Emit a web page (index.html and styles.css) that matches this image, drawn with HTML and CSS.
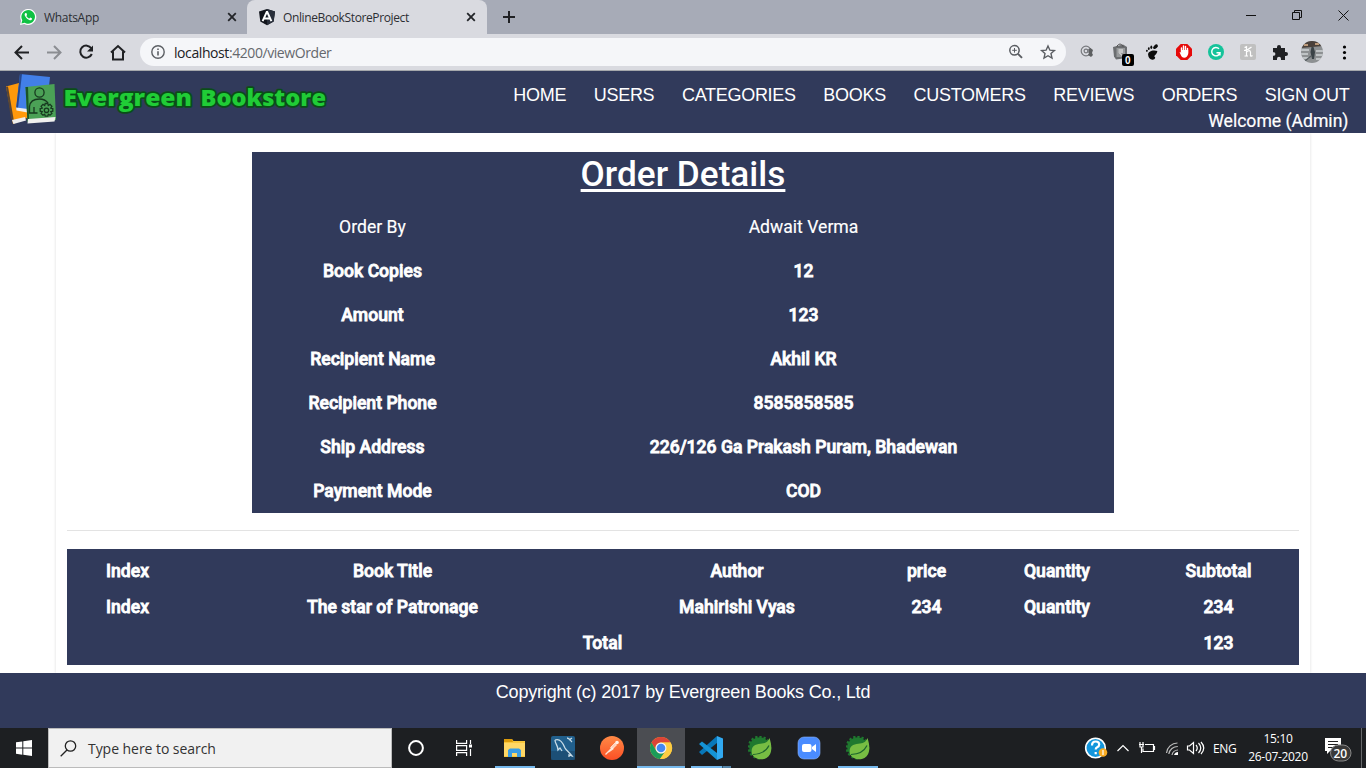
FILE: index.html
```html
<!DOCTYPE html>
<html lang="en">
<head>
<meta charset="utf-8">
<title>OnlineBookStoreProject</title>
<link rel="stylesheet" href="styles.css">
</head>
<body>
<div class="tabs">
  <div class="tab">
    <svg class="fav" width="18" height="18" viewBox="0 0 18 18"><path d="M1 17l1.2-4.3A8 8 0 1 1 5.300 15.900Z" fill="#fff"/><path d="M2.400 15.600l.9-3.300A6.800 6.800 0 1 1 5.700 14.700Z" fill="#0fc143"/><path d="M6.600 5c-1.200.6-1.200 2-.4 3.300 1 1.900 2.600 3.300 4.600 3.900 1.300.3 2.300-.5 2.300-1.700L11.300 9.600l-.9 1C9 10.200 7.900 9 7.300 7.900L8.100 7 7.400 5.100Z" fill="#fff"/></svg>
    <span class="tab-title t-wa">WhatsApp</span>
    <svg class="x" width="10" height="10" viewBox="0 0 10 10"><path d="M1.200 1.200l7.600 7.600M8.800 1.200L1.200 8.800" stroke="#222428" stroke-width="1.800"/></svg>
  </div>
  <div class="tab active">
    <svg class="fav" width="18" height="18" viewBox="0 0 18 18"><path d="M9 1l8 2.600-1.300 10L9 17.300l-6.700-3.700L1 3.600Z" fill="#12151c"/><path d="M9 1l8 2.600-1.300 10L9 17.300Z" fill="#292f3b"/><path d="M9 3.500L4.600 13.200M9 3.500l4.400 9.700M6.300 10.500h5.400" stroke="#fff" stroke-width="1.900" fill="none"/></svg>
    <span class="tab-title t-ob">OnlineBookStoreProject</span>
    <svg class="x" width="10" height="10" viewBox="0 0 10 10"><path d="M1.200 1.200l7.600 7.600M8.800 1.200L1.200 8.800" stroke="#222428" stroke-width="1.800"/></svg>
  </div>
  <svg class="plus" width="12" height="12" viewBox="0 0 12 12"><path d="M6 0v12M0 6h12" stroke="#202124" stroke-width="2"/></svg>
  <svg class="winbtns" width="106" height="14" viewBox="0 0 106 14"><path d="M0 7.500h10M46.500 4.500h7v7h-7zM48.500 4.500v-2h7v7h-2M92.500 2.500l10 10M102.500 2.500l-10 10" stroke="#111" fill="none"/></svg>
</div>
<div class="toolbar">
  <svg class="navbtns" width="116" height="20" viewBox="0 0 116 20" fill="none" stroke-width="2"><path d="M29 10.500H16M22 4l-6.500 6.500L22 17" stroke="#202124"/><path d="M47 10.500h13M54 4l6.500 6.500L54 17" stroke="#8b8d92"/><path d="M91.300 6.300A6 6 0 1 0 91.800 12" stroke="#202124"/><path d="M93 3.500v6h-6z" fill="#202124"/><path d="M111 10.500l7-6.500 7 6.500M113 9.500v8h10v-8" stroke="#202124"/></svg>
  <div class="omni">
    <svg width="14" height="14" viewBox="0 0 14 14"><circle cx="7" cy="7" r="6.200" fill="none" stroke="#5c5f64" stroke-width="1.400"/><path d="M7 6.200v4.300M7 3.500v1.600" stroke="#5c5f64" stroke-width="1.600"/></svg>
    <span class="url"><b>localhost</b>:4200/viewOrder</span>
    <svg class="omni-r" width="48" height="16" viewBox="0 0 48 16" fill="none" stroke="#5a5d62"><circle cx="5.500" cy="6.300" r="4.700" stroke-width="1.500"/><path d="M9 9.800l4 4" stroke-width="1.900"/><path d="M3.200 6.300h4.600M5.500 4v4.600"/><path d="M39 2l1.900 4.200 4.500.4-3.400 3 1 4.400-4-2.300-4 2.300 1-4.400-3.400-3 4.500-.4Z" stroke-width="1.400"/></svg>
  </div>
  <svg class="ext" width="286" height="32" viewBox="1080 36 286 32">
    <circle cx="1086" cy="51" r="4.800" fill="none" stroke="#77797d" stroke-width="1.200"/><circle cx="1086" cy="51" r="1.900" fill="none" stroke="#77797d" stroke-width="1.200"/><path d="M1088 49v3q1.500 1.200 2.500-.7" fill="none" stroke="#77797d"/><path d="M1088.500 49l2-1 2.500 2-1 3 1 2-2 2-3-2 1-2Z" fill="#5d5f61"/>
    <path d="M1113 47l10-2.500 4 2.500v11l-11 1.500-2-3Z" fill="#6b6d70"/><path d="M1117 47v-1q3-4 6 0v1" stroke="#555" fill="none"/><path d="M1116.500 48h8.500v9h-8.500z" fill="#97999b"/><path d="M1118.500 50h4.500M1118.500 52h4.500M1119.500 53l3 3" stroke="#eee"/>
    <rect x="1122" y="54" width="12" height="12" rx="2" fill="#000"/><text x="1125" y="64" class="badge">0</text>
    <g fill="#0c0c0c"><ellipse cx="1155.500" cy="46.700" rx="2.800" ry="1.700" transform="rotate(-40 1155.500 46.700)"/><ellipse cx="1151.300" cy="47.200" rx="1" ry="1.700"/><ellipse cx="1148.800" cy="48.700" rx=".9" ry="1.400"/><ellipse cx="1146.900" cy="50.800" rx=".9" ry="1.100"/><path d="M1157.300 51c-4-1.700-9.600.3-9.200 3.800.3 2.700 2 5.200 4.600 5 2.600-.3 3.200-2.300 1.700-3.200-1-.6 3-2.700 2.900-5.600Z"/></g>
    <path d="M1180.700 44h6.600l4.700 4.700v6.600l-4.700 4.700h-6.600l-4.700-4.700v-6.600Z" fill="#e60a0a"/><path d="M1181.500 52v-4M1183.500 51v-5M1185.500 51v-4.500M1187.500 53v-4.500" stroke="#fff" stroke-width="1.400" stroke-linecap="round"/><path d="M1179.500 52l2 .5V50h6.700v4q-1 3.700-4 3.700-2.500 0-3.500-3Z" fill="#fff"/>
    <circle cx="1216" cy="52" r="8" fill="#15c39a"/><path d="M1219 48.800a4.200 4.200 0 1 0 1 4h-3.500M1220 52.500v3" stroke="#fff" stroke-width="1.400" fill="none"/>
    <rect x="1240" y="44" width="16" height="16" rx="2" fill="#c0c0c0"/><path d="M1244.500 47.500l2-.8v9M1244.500 56h3.500M1246.500 52q3.500-3 4 .3v3.500q.8.800 2-.3M1244 50.500q4-.3 7.500-3.500" stroke="#fff" stroke-width="1.200" fill="none"/>
    <path d="M1273 48h4v-1a2 2 0 0 1 4 0v1h4v4h1a2 2 0 0 1 0 4h-1v4h-4v-1.300a2 2 0 0 0-4 0v1.300h-4v-4.300h1a1.800 1.800 0 0 0 0-3.500h-1Z" fill="#202124"/>
    <clipPath id="av"><circle cx="1312" cy="52" r="11"/></clipPath><g clip-path="url(#av)"><path d="M1300 40h24v24h-24Z" fill="#8d9092"/><path d="M1300 40h24v6l-24 2Z" fill="#4a403a"/><path d="M1304 44h4v2h-4M1315 43h4v2h-4" fill="#bd9a7a"/><path d="M1300 50h9M1300 54h8M1316 51h8M1316 55h8M1301 58h8M1316 59h5" stroke="#d0d4d6" stroke-width="1.400"/><path d="M1311.500 47h2l1.500 5-1 7h-2l-1.500-7Z" fill="#3b4347"/><path d="M1305 61l6-5" stroke="#555c60" stroke-width="1.400"/></g>
    <circle cx="1344.500" cy="47" r="1.600"/><circle cx="1344.500" cy="52.500" r="1.600"/><circle cx="1344.500" cy="58" r="1.600"/>
  </svg>
</div>
<header class="site-head">
  <svg class="logo" width="335" height="60" viewBox="0 71 335 60">
    <path d="M6 86.500l13-3.500 10 34-16 7Z" fill="#ff990b"/><path d="M6 87l2-.5 6 35-3-3Z" fill="#5b4632"/><path d="M12 120l13-3 1 3.500-12.500 3.500Z" fill="#eee"/>
    <path d="M20 74l30 3-4 36-30-4Z" fill="#427fe8"/><path d="M20 74l2 0-4 34-2 1Z" fill="#25478c"/><path d="M16 107.500l12 1.500-.5 3.500-11-2Z" fill="#eee"/>
    <path d="M25.500 87l29-3 1.500 36-28.500 2Z" fill="#4ba156"/><path d="M25.500 87l2.500 0 1 32-1.500 3.500Z" fill="#1b5427"/><path d="M28 119l27.500-2-1 4.500-27 2Z" fill="#f0f0ee"/>
    <g fill="none" stroke="#17391f" stroke-width="1.300"><circle cx="39.500" cy="92.500" r="4.600"/><path d="M37.500 113h-8v-6.500q.8-7.500 10-7.500 5.500 0 8.500 4M34 107v6"/><circle cx="46.500" cy="110.300" r="2.200"/><path d="M45.200 103.500h2.600l.5 2 1.700-1.100 1.900 1.900-1.100 1.700 2 .5v2.700l-2 .5 1.100 1.800-1.900 1.800-1.700-1.100-.5 2h-2.600l-.5-2-1.700 1.100-1.900-1.800 1.100-1.800-2-.5v-2.700l2-.5-1.100-1.700 1.900-1.900 1.700 1.100Z"/></g>
    <text class="brand" x="63.500" y="105.500" textLength="128.500" lengthAdjust="spacingAndGlyphs">Evergreen</text>
    <text class="brand" x="200.500" y="105.500" textLength="125.500" lengthAdjust="spacingAndGlyphs">Bookstore</text>
  </svg>
  <div class="head-r">
    <nav><a>HOME</a><a>USERS</a><a>CATEGORIES</a><a>BOOKS</a><a>CUSTOMERS</a><a>REVIEWS</a><a>ORDERS</a><a>SIGN OUT</a></nav>
    <div class="welcome">Welcome (Admin)</div>
  </div>
</header>
<main>
  <section class="order">
    <h1>Order Details</h1>
    <div class="pair plain"><span>Order By</span><span>Adwait Verma</span></div>
    <div class="pair"><span>Book Copies</span><span>12</span></div>
    <div class="pair"><span>Amount</span><span>123</span></div>
    <div class="pair"><span>Recipient Name</span><span>Akhil KR</span></div>
    <div class="pair"><span>Recipient Phone</span><span>8585858585</span></div>
    <div class="pair"><span>Ship Address</span><span>226/126 Ga Prakash Puram, Bhadewan</span></div>
    <div class="pair"><span>Payment Mode</span><span>COD</span></div>
  </section>
  <hr>
  <section class="items">
    <div class="row"><span>Index</span><span>Book Title</span><span>Author</span><span>price</span><span>Quantity</span><span>Subtotal</span></div>
    <div class="row"><span>Index</span><span>The star of Patronage</span><span>Mahirishi Vyas</span><span>234</span><span>Quantity</span><span>234</span></div>
    <div class="row"><span class="total">Total</span><span>123</span></div>
  </section>
</main>
<footer>Copyright (c) 2017 by Evergreen Books Co., Ltd</footer>
<div class="taskbar">
  <div class="start"><svg width="16" height="16" viewBox="0 0 16 16"><path d="M0 2.300l6.300-.9v6.100H0ZM7.300 1.200L16 0v7.500H7.300ZM0 8.500h6.300v6.200L0 13.800ZM7.300 8.500H16V16l-8.700-1.200Z" fill="#fff"/></svg></div>
  <div class="search"><svg width="17" height="17" viewBox="0 0 17 17"><circle cx="10.500" cy="6" r="5.200" fill="none" stroke="#222" stroke-width="1.300"/><path d="M7 10L.7 16.300" stroke="#222" stroke-width="1.300"/></svg><span>Type here to search</span></div>
  <div class="apps">
    <div class="app"><svg width="24" height="24"><circle cx="12" cy="12" r="6.900" fill="none" stroke="#fff" stroke-width="2"/></svg></div>
    <div class="app"><svg width="24" height="24" fill="none" stroke="#fff" stroke-width="1.200"><path d="M3.600 4v3.400h10V4M3.600 20v-3.400h10V20M3.600 9.600h10v4.800h-10zM17.500 4v4M17.500 13v7"/><path d="M16 8.500h3v3h-3z" fill="#fff" stroke="none"/></svg></div>
    <div class="app open nudge"><svg width="24" height="24"><path d="M1 3h8l1.500 2H22v16H1Z" fill="#f9c73c"/><path d="M1 3h8l1 3H1Z" fill="#dc9b0b"/><path d="M1 7h21v13H1Z" fill="#ffd766"/><path d="M5 21v-7l2-1.500h9l2 1.500v7h-4v-4H9v4Z" fill="#3b9de4"/></svg></div>
    <div class="app"><svg width="24" height="24"><rect width="24" height="24" rx="2" fill="#215f8c"/><path d="M0 15h24v9H0Z" fill="#194567" opacity=".6"/><path d="M4 4c5-2 8 3 10 8 1 2 4 4 7 8l-3-1v2M4 4c0 4 3 5 3 10l2-2 2 3M16 2c2 0 3 2 5 4M18 4l3-2" fill="none" stroke="#c9dce7" stroke-width="1.300"/></svg></div>
    <div class="app"><svg width="24" height="24"><defs><linearGradient id="pm" x2="0" y2="1"><stop stop-color="#ff8a46"/><stop offset="1" stop-color="#fb4f25"/></linearGradient></defs><circle cx="12" cy="12" r="12" fill="url(#pm)"/><path d="M5.500 18.500l8-8M8.500 16l5-3.500" stroke="#ffe5d5" stroke-width="1.300"/><path d="M10.500 11.500l4.500-4.500 1.500 2-3.500 3.500Z" fill="#ffcfb5" stroke="#fff" stroke-width=".6"/><circle cx="17" cy="6.500" r="1.800" fill="#fff1e8"/></svg></div>
    <div class="app current"><svg width="24" height="24"><circle cx="12" cy="12" r="11" fill="#fbc12e"/><path d="M2.500 6.500A11 11 0 0 1 21.600 6.500H12A5.500 5.500 0 0 0 7.200 14.700Z" fill="#dc4437"/><path d="M2.500 6.500A11 11 0 0 0 11 23l5.800-8.300a5.500 5.500 0 0 1-9.600 0Z" fill="#1a9c59"/><path d="M12 6.500h9.600A11 11 0 0 1 11 23l5.800-8.300A5.500 5.500 0 0 0 12 6.500Z" fill="#fdcc42"/><circle cx="12" cy="12" r="5.500" fill="#f2f4f6"/><circle cx="12" cy="12" r="4.300" fill="#4487f2"/></svg></div>
    <div class="app open code"><svg width="24" height="24"><path d="M18 0v7L3 19l-3-3Z" fill="#0877b9"/><path d="M0 8l3-2.500L18 17v7L0 8Z" fill="#1593d5"/><path d="M18 0l6 2.500v19L18 24Z" fill="#31a9f1"/></svg></div>
    <div class="app"><svg width="24" height="24"><use href="#spring"/></svg></div>
    <div class="app"><svg width="24" height="24"><rect x="1" y="1" width="22" height="22" rx="6" fill="#4a8cff" stroke="#8bb4fa" stroke-width=".6"/><rect x="5" y="8" width="9.500" height="8" rx="2" fill="#fff"/><path d="M15 11l4-3v8l-4-3Z" fill="#fff"/></svg></div>
    <div class="app open"><svg width="24" height="24"><g id="spring"><circle cx="11.500" cy="11.500" r="10.300" fill="#1f792f"/><circle cx="11.500" cy="11.500" r="10.800" fill="none" stroke="#1f792f" stroke-width="2.200" stroke-dasharray="2.300 1.900"/><path d="M4 18C2 9 9 8 14 7.500c4-.5 6-2 7.500-5.500 3 9 2.500 17-3 20-5 2.800-12 1-14.500-4Z" fill="#77bd43"/><path d="M5 18.500q12-.5 16-9" stroke="#1d652d" stroke-width="1.200" fill="none"/></g></svg></div>
  </div>
  <div class="tray">
    <svg width="122" height="30" viewBox="1084 733 122 30" fill="none" stroke="#fff" stroke-width="1.200">
      <circle cx="1095.500" cy="748" r="9.800" fill="#1396dc" stroke-width="1.600"/><path d="M1092 745.500q0-4 3.700-4 3.500 0 3.500 3 0 1.800-2 2.800-1.500.8-1.500 2.300M1095.700 752v2.200" stroke-width="2.200"/><circle cx="1103" cy="752.500" r="4.300" fill="#f9ac24" stroke="none"/><path d="M1103 750v5"/>
      <path d="M1117.500 751l5.500-5.500 5.500 5.500"/><path d="M1145 744.500h8.500v7h-10.500v-3M1154.500 746v4M1139 744.500h5M1140 744v-2M1143 744v-2M1140 745v2h3v-2M1141.500 747v6"/>
      <path d="M1166.500 753a11 11 0 0 1 11-10M1168.800 754a9 9 0 0 1 9-7.500M1172 755a6 6 0 0 1 6-5" stroke="#bbb"/><path d="M1174 755q1-3 4-3v3Z" fill="#fff" stroke="none"/>
      <path d="M1187.500 746h2l4-3.500v11l-4-3.500h-2ZM1196 745q2.500 3 0 6M1198.500 743q4.500 5 0 10M1201 742q5.500 6 0 12"/>
    </svg>
    <span class="lang">ENG</span>
    <div class="clock"><span class="time">15:10</span><span class="date">26-07-2020</span></div>
    <svg class="note" width="32" height="30" viewBox="1322 735 32 30"><path d="M1325 740h16v13h-11l-3 3v-3h-2Z" fill="#fff"/><path d="M1328 743.500h10M1328 746.500h10M1328 749.500h7" stroke="#222"/><rect x="1330.500" y="747" width="20.500" height="16" rx="8" fill="#3a3a3a" stroke="#888"/><text class="count" x="1333.500" y="759.500">20</text></svg>
    <i class="peek"></i>
  </div>
</div>
</body>
</html>
```
FILE: styles.css
```css
* { box-sizing: border-box; }
body { margin: 0; width: 1366px; height: 768px; overflow: hidden; background: #fff; display: flex; flex-direction: column; font-family: Roboto, sans-serif; }
svg { flex: none; display: block; }
.tabs { height: 34px; background: #a7abb7; display: flex; align-items: center; font: 12px "Open Sans", sans-serif; color: #2c2e33; }
.tab { width: 247px; height: 34px; padding: 0 10px 0 19px; display: flex; align-items: center; }
.active { width: 240px; padding: 0 11px; background: #d9dae0; border-radius: 8px 8px 0 0; }
.tab-title { flex: 1; margin-left: 7px; white-space: nowrap; }
.t-wa { letter-spacing: -.3px; }
.t-ob { letter-spacing: -.38px; }
.plus { margin-left: 16px; }
.winbtns { margin: -4px 14px 0 auto; }
.toolbar { height: 37px; background: #d9dae0; border-bottom: 1px solid #a5a8ac; display: flex; align-items: center; }
.navbtns { overflow: visible; margin-right: 24px; }
.omni { width: 926px; height: 28px; border-radius: 14px; background: #f5f6f9; display: flex; align-items: center; padding: 0 9px 0 11px; }
.url { margin-left: 9px; font: 14px "Open Sans", sans-serif; color: #65686d; letter-spacing: -.42px; }
.url b { font-weight: 400; color: #202124; }
.omni-r { margin-left: auto; }
.ext { margin-left: 14px; }
.badge { font: bold 10px "Liberation Sans", sans-serif; fill: #fff; }
.site-head { height: 62px; background: #313a5b; display: flex; justify-content: space-between; color: #fff; position: relative; z-index: 1; }
.brand { font: 800 23px "Open Sans", sans-serif; fill: #20cc36; stroke: #0a4d18; stroke-width: 3.500px; paint-order: stroke; stroke-linejoin: round; }
.head-r { padding: 11px 16.500px 0 0; }
nav { display: flex; gap: 27.550px; font: 18px/26px "Liberation Sans", sans-serif; letter-spacing: -.28px; }
.welcome { text-align: right; font-size: 17.600px; line-height: 26px; padding-right: 1px; -webkit-text-stroke: .2px #fff; }
main { width: 1254px; height: 540px; margin: 0 auto; padding: 19px 11px 0; box-shadow: 0 0 3px #ddd; display: flex; flex-direction: column; }
.order { width: 862px; height: 361px; margin: 0 auto; background: #313a5b; color: #fff; }
h1 { margin: 0; height: 53px; font-size: 35.200px; font-weight: 500; line-height: 45px; text-align: center; text-decoration: underline; text-decoration-thickness: 3px; text-underline-offset: 3px; text-decoration-skip-ink: none; }
.pair { height: 44px; display: grid; grid-template-columns: 241px 621px; line-height: 44px; text-align: center; }
.pair, .row { font-size: 17.600px; font-weight: 500; -webkit-text-stroke: .8px #fff; }
.plain { font-weight: 400; -webkit-text-stroke: .15px #fff; }
hr { width: 100%; height: 1px; border: 0; background: #e3e3e3; margin: 17px 0 18px; }
.items { height: 116px; padding-top: 4px; background: #313a5b; color: #fff; }
.row { height: 36px; line-height: 36px; display: grid; grid-template-columns: 121px 409px 280px 99px 162px 161px; text-align: center; }
.total { grid-column: 1 / 6; }
footer { height: 55px; background: #313a5b; color: #fff; text-align: center; font: 18px/38px "Liberation Sans", sans-serif; letter-spacing: -.19px; }
.taskbar { height: 40px; background: #1d1f22; display: flex; color: #fff; font-family: "Open Sans", sans-serif; }
.start { width: 48px; display: grid; place-items: center; }
.search { width: 344px; background: #f1f1f1; border: 1px solid #bbb; display: flex; align-items: center; padding-left: 11px; color: #333; font-size: 14px; }
.search span { margin-left: 11px; letter-spacing: -.05px; }
.apps { display: flex; gap: 1.100px; }
.app { width: 48px; height: 40px; display: grid; place-items: center; background: linear-gradient(#76b9ed, #76b9ed) no-repeat 50% 100% / 0 2px; }
.open { background-size: 40px 2px; }
.nudge { margin: 0 -1px 0 1px; }
.code { background-image: linear-gradient(90deg, #76b9ed 31px, #34586f 31px 32px, #5585a8 32px); }
.current { background: linear-gradient(#76b9ed, #76b9ed) no-repeat 50% 100% / 48px 2px #4b4d52; }
.tray { margin-left: auto; width: 282px; display: flex; align-items: center; font-size: 12px; }
.lang { margin-left: 7px; width: 26px; letter-spacing: -.4px; }
.clock { width: 62px; margin-left: 8px; display: flex; flex-direction: column; align-items: center; line-height: 18px; letter-spacing: -.32px; }
.note { margin-left: 13px; }
.peek { width: 1px; height: 40px; margin: 0 4px 0 auto; background: #66686a; }
.count { font: 600 12px "Open Sans", sans-serif; fill: #fff; }
```
